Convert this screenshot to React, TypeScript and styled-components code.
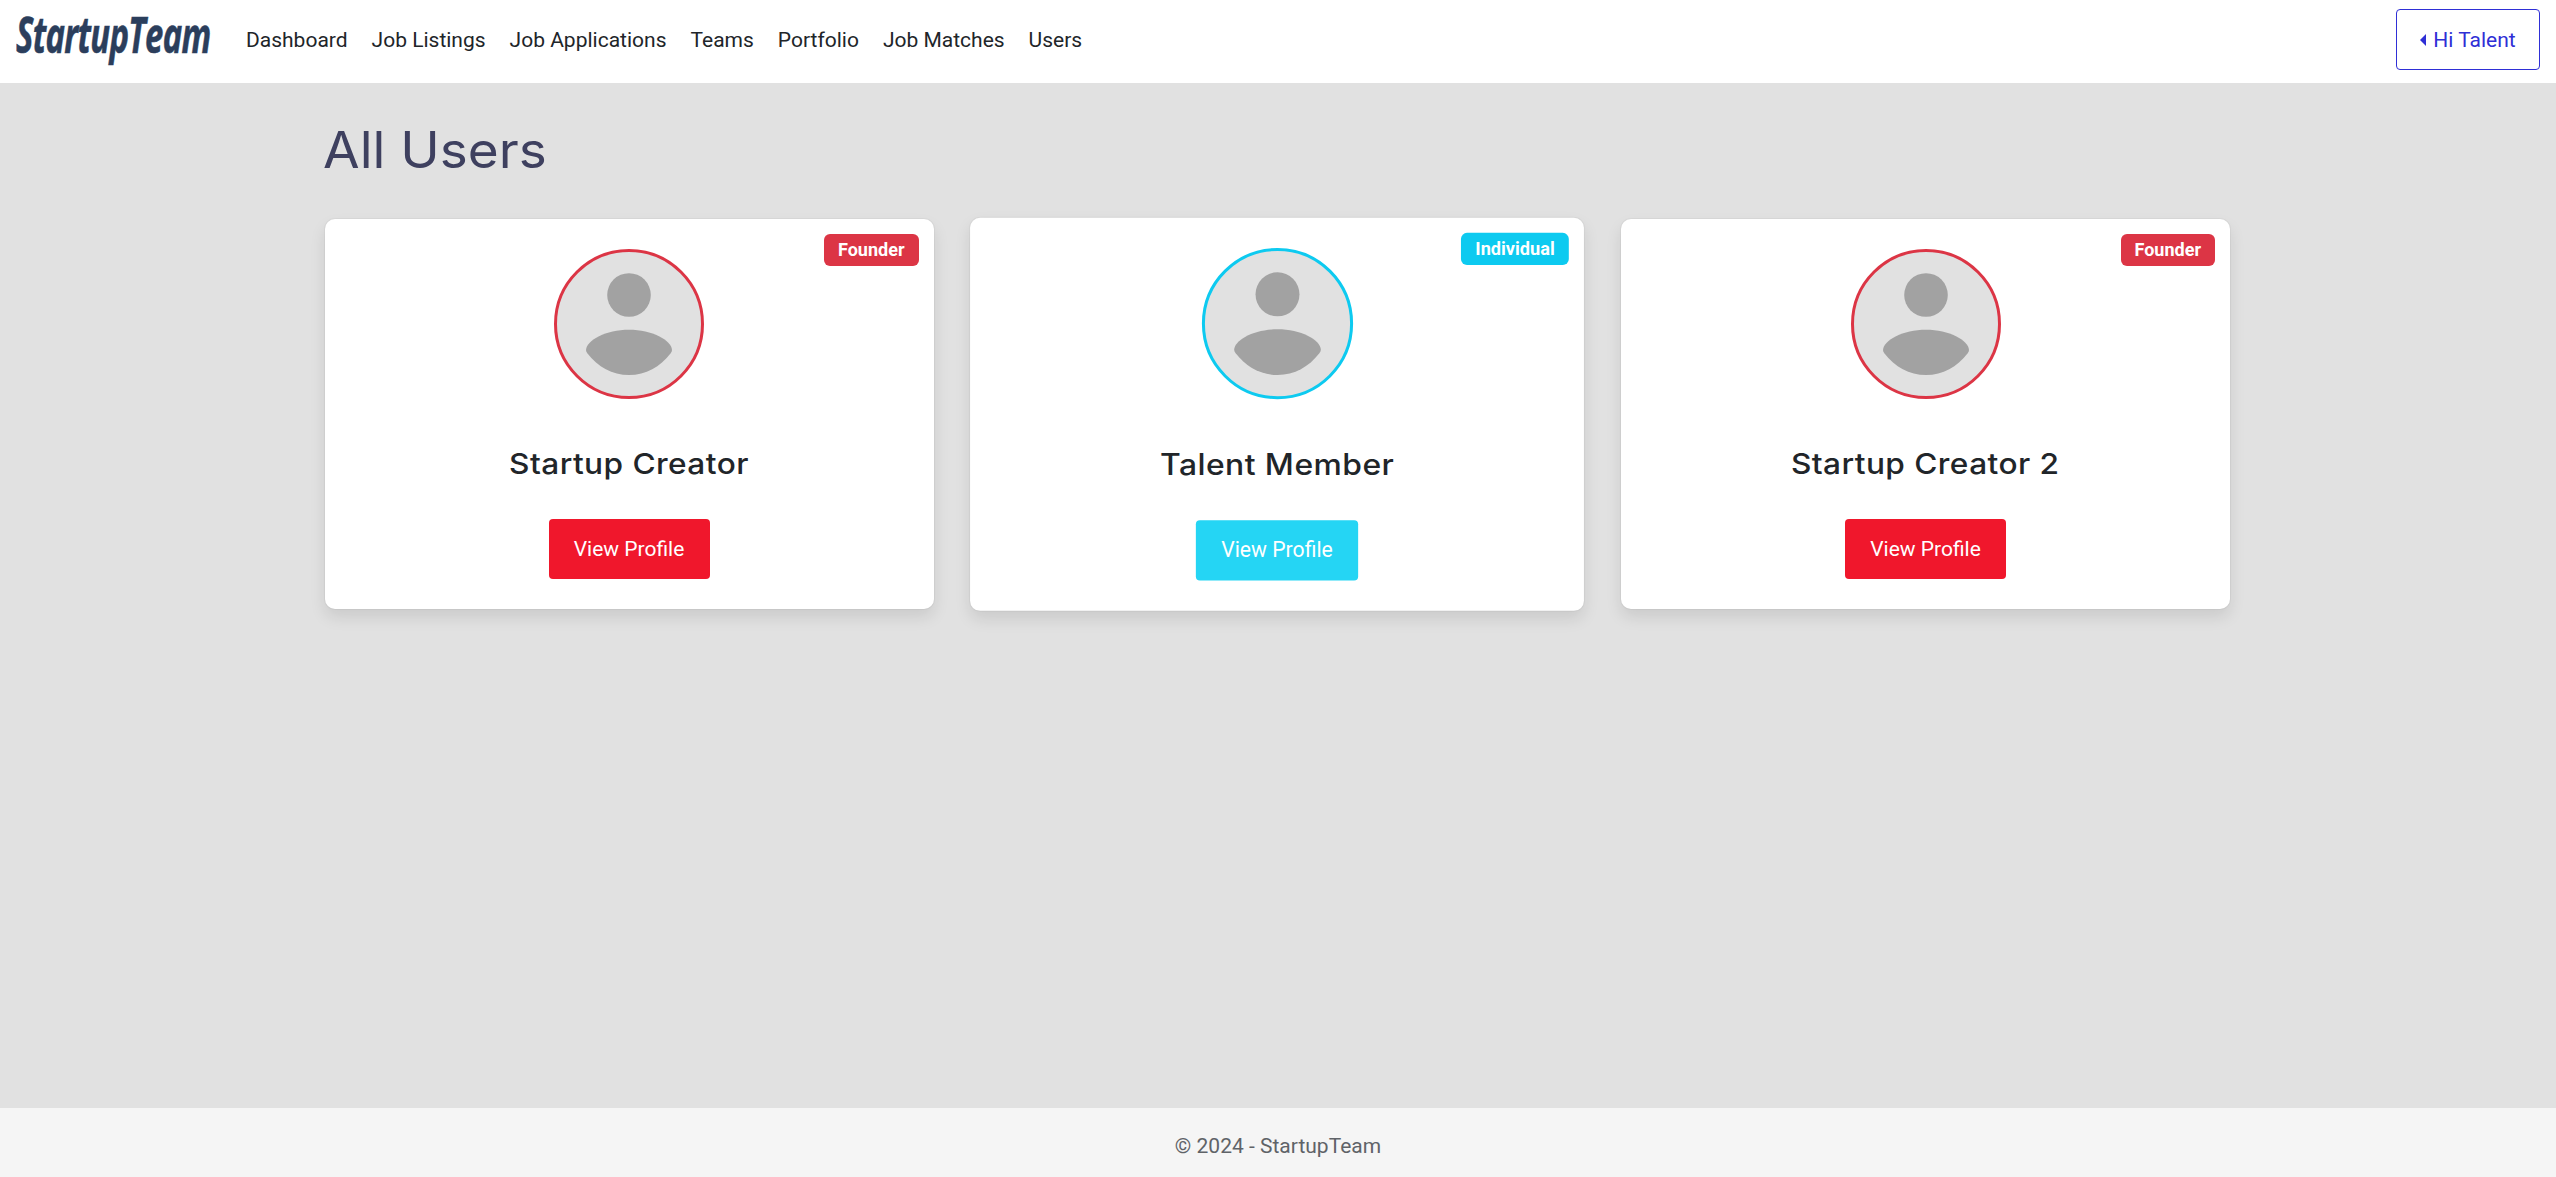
import React from "react";
import styled, { createGlobalStyle } from "styled-components";

const GlobalStyle = createGlobalStyle`
  *, *::before, *::after { box-sizing: border-box; }
  body {
    margin: 0;
    background: #e1e1e1;
    color: #212529;
    font-family: Roboto, "Liberation Sans", sans-serif;
    font-size: 21px;
    line-height: 30px;
  }
`;

const Page = styled.div`
  display: flex;
  flex-direction: column;
  min-height: 100vh;
`;

const Header = styled.header`
  display: flex;
  align-items: flex-start;
  height: 83px;
  padding: 0 16px 0 12px;
  background: #fff;
`;

const Brand = styled.a`
  display: block;
  width: 222px;
  height: 80px;
  padding-left: 4px;
`;

const Wordmark = styled.span`
  display: block;
  width: max-content;
  color: #2b3e5c;
  font-family: "Open Sans", "Noto Sans", sans-serif;
  font-size: 50px;
  font-weight: 700;
  font-style: italic;
  line-height: 68px;
  letter-spacing: -1px;
  -webkit-text-stroke: 0.6px #2b3e5c;
  transform: scaleX(0.656);
  transform-origin: left;
`;

const Nav = styled.nav`
  display: flex;
  flex: 1;
  height: 61px;
  margin-top: 9px;
  align-items: center;
`;

const NavLink = styled.a`
  padding: 0 12px;
  color: #212529;
  text-decoration: none;
`;

const AccountButton = styled.button`
  display: flex;
  align-items: center;
  justify-content: center;
  gap: 7px;
  width: 144px;
  height: 61px;
  margin-top: 9px;
  padding: 0;
  border: 1px solid #2f2fd6;
  border-radius: 4px;
  background: transparent;
  color: #2f2fd6;
  font: inherit;
`;

const Caret = styled.span`
  width: 0;
  border-top: 6px solid transparent;
  border-bottom: 6px solid transparent;
  border-right: 6px solid currentColor;
`;

const Main = styled.main`
  flex: 1;
  width: 1906px;
  margin: 0 auto;
  padding: 37px 1px 0 0;
`;

const Title = styled.h1`
  width: max-content;
  margin: 0 0 39px -2px;
  color: #3e405f;
  font-family: Inter, sans-serif;
  font-size: 50px;
  font-weight: 400;
  line-height: 60px;
  transform: scaleX(1.062);
  transform-origin: left;
`;

const CardGrid = styled.section`
  display: grid;
  grid-template-columns: repeat(3, 609px);
  justify-content: space-between;
  margin-left: -0.5px;
`;

const Card = styled.article<{ $raised?: boolean }>`
  display: flex;
  flex-direction: column;
  align-items: center;
  position: relative;
  height: 390px;
  padding-top: 30px;
  border-radius: 10px;
  background: #fff;
  box-shadow: 0 8px 16px rgba(0, 0, 0, 0.1), 0 0 0 1px rgba(0, 0, 0, 0.03);
  transform: ${(p) => (p.$raised ? "translate(-0.5px, 0.3px) scale(1.008)" : "none")};
`;

const Badge = styled.span<{ $color: string }>`
  position: absolute;
  top: 15px;
  right: 15px;
  height: 32px;
  padding: 0 14px;
  border-radius: 6px;
  background: ${(p) => p.$color};
  color: #fff;
  font-size: 18px;
  font-weight: 700;
  line-height: 32px;
`;

const Avatar = styled.div<{ $color: string }>`
  width: 150px;
  height: 150px;
  border: 3px solid ${(p) => p.$color};
  border-radius: 50%;
  background: #e1e1e1;
`;

const Name = styled.h2`
  margin: 47px 0 0;
  font-family: Inter, sans-serif;
  font-size: 29px;
  font-weight: 500;
  line-height: 36px;
  letter-spacing: 0.4px;
  transform: scaleX(1.09);
`;

const ProfileButton = styled.a<{ $color: string }>`
  display: flex;
  align-items: center;
  justify-content: center;
  width: 161px;
  height: 60px;
  margin-top: 37px;
  border-radius: 4px;
  background: ${(p) => p.$color};
  color: #fff;
`;

const Footer = styled.footer`
  height: 69px;
  padding-top: 23px;
  background: #f5f5f5;
  color: #5f6368;
  text-align: center;
`;

const links = ["Dashboard", "Job Listings", "Job Applications", "Teams", "Portfolio", "Job Matches", "Users"];

const roles = {
  Founder: { accent: "#dc3545", button: "#f0172c" },
  Individual: { accent: "#0dcaf0", button: "#25d5f4" },
};

const users: { name: string; role: keyof typeof roles; raised?: boolean }[] = [
  { name: "Startup Creator", role: "Founder" },
  { name: "Talent Member", role: "Individual", raised: true },
  { name: "Startup Creator 2", role: "Founder" },
];

function Person() {
  return (
    <svg width="144" height="144" viewBox="0 0 144 144" fill="#a2a2a2">
      <circle cx="72" cy="43" r="21.8" />
      <path d="M29 98C29.5 88 49 77.700 72 77.700S114.500 88 115 98Q115 99.500 113.500 101.500C103 115 89 123 72 123S41 115 30.500 101.500Q29 99.500 29 98Z" />
    </svg>
  );
}

export default function App() {
  return (
    <Page>
      <GlobalStyle />
      <Header>
        <Brand><Wordmark>StartupTeam</Wordmark></Brand>
        <Nav>
          {links.map((l) => <NavLink key={l}>{l}</NavLink>)}
        </Nav>
        <AccountButton><Caret />Hi Talent</AccountButton>
      </Header>
      <Main>
        <Title>All Users</Title>
        <CardGrid>
          {users.map((u) => (
            <Card key={u.name} $raised={u.raised}>
              <Badge $color={roles[u.role].accent}>{u.role}</Badge>
              <Avatar $color={roles[u.role].accent}><Person /></Avatar>
              <Name>{u.name}</Name>
              <ProfileButton $color={roles[u.role].button}>View Profile</ProfileButton>
            </Card>
          ))}
        </CardGrid>
      </Main>
      <Footer>© 2024 - StartupTeam</Footer>
    </Page>
  );
}
